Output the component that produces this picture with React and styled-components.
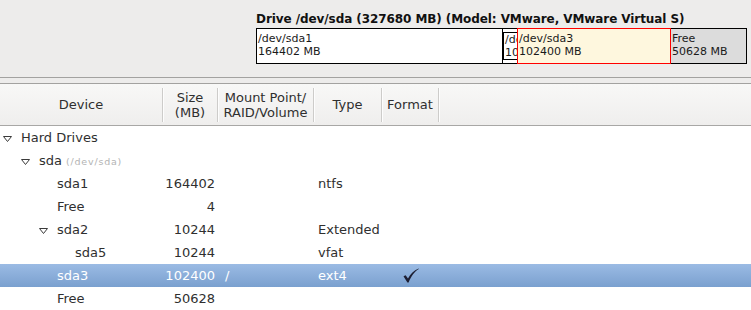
import React from "react";
import styled, { createGlobalStyle } from "styled-components";

const Global = createGlobalStyle`
  html, body { margin: 0; padding: 0; }
  body {
    background: #ffffff;
    font-family: "DejaVu Sans", "Liberation Sans", sans-serif;
    color: #2f2f2f;
    overflow: hidden;
  }
`;

const Page = styled.div`
  width: 751px;
  height: 310px;
  display: flex;
  flex-direction: column;
  overflow: hidden;
`;

const DrivePanel = styled.div`
  height: 78px;
  box-sizing: border-box;
  background: #edeceb;
  padding: 12px 0 0 256px;
  display: flex;
  flex-direction: column;
  gap: 2px;
`;

const DriveTitle = styled.div`
  font-size: 12px;
  line-height: 14px;
  font-weight: bold;
  letter-spacing: -0.08px;
  color: #111;
  white-space: nowrap;
`;

const Bar = styled.div`
  display: flex;
  width: 491px;
  height: 36px;
`;

const Segment = styled.div`
  box-sizing: border-box;
  height: 36px;
  flex: 0 0 ${(p) => p.$w}px;
  background: ${(p) => p.$bg || "#ffffff"};
  border-top: 1px solid ${(p) => (p.$selected ? "#ff0000" : "#000")};
  border-bottom: 1px solid ${(p) => (p.$selected ? "#ff0000" : "#000")};
  border-left: ${(p) =>
    p.$selected ? "1px solid #ff0000" : p.$first ? "1px solid #000" : "none"};
  border-right: ${(p) =>
    p.$selected ? "1px solid #ff0000" : p.$edge ? "1px solid #000" : "none"};
  padding: ${(p) => (p.$container ? "3px 0" : "3px 0 0 1px")};
  overflow: hidden;
  font-size: 11px;
  line-height: 13px;
  color: #1a1a1a;
  white-space: nowrap;
`;

const InnerBox = styled.div`
  box-sizing: border-box;
  height: 28px;
  border: 1px solid #000;
  border-right: none;
  background: #fff;
  padding: 0 0 0 1px;
  overflow: hidden;
`;

const Divider = styled.div`
  height: 5px;
  background: #edeceb;
  border-top: 1px solid #a3a2a0;
  border-bottom: 1px solid #a3a2a0;
`;

const cols = "162px 55px 96px 68px 57px 1fr";

const HeaderRow = styled.div`
  display: grid;
  grid-template-columns: ${cols};
  height: 41px;
  align-items: center;
  background: linear-gradient(#f8f8f7, #efeeed);
  border-bottom: 1px solid #a8a7a5;
  font-size: 13px;
  color: #2f2f2f;
`;

const HeaderCell = styled.div`
  box-sizing: border-box;
  height: 34px;
  display: flex;
  align-items: center;
  justify-content: center;
  text-align: center;
  line-height: 15px;
  border-left: ${(p) => (p.$sep ? "1px solid #cdccca" : "none")};
  box-shadow: ${(p) => (p.$sep ? "inset 1px 0 0 #fdfdfd" : "none")};
  white-space: nowrap;
`;

const Row = styled.div`
  display: grid;
  grid-template-columns: ${cols};
  height: 23px;
  align-items: center;
  font-size: 13px;
  white-space: nowrap;
  color: ${(p) => (p.$selected ? "#ffffff" : "#2f2f2f")};
  background: ${(p) =>
    p.$selected ? "linear-gradient(#9bbbe4, #7aa0cf)" : "#ffffff"};
`;

const NameCell = styled.div`
  display: flex;
  align-items: center;
  padding-left: ${(p) => 3 + p.$depth * 18}px;
`;

const Expander = styled.span`
  flex: 0 0 18px;
  display: flex;
  align-items: center;
  height: 23px;
  svg { display: block; margin-top: 3px; }
`;

const SubLabel = styled.span`
  font-size: 9.5px;
  letter-spacing: 0.8px;
  color: #b3b3b3;
  margin-left: 4px;
  margin-top: 2px;
`;

const SizeCell = styled.div`
  text-align: right;
  padding-right: 2px;
`;

const MountCell = styled.div`
  padding-left: 8px;
`;

const TypeCell = styled.div`
  padding-left: 5px;
`;

const FormatCell = styled.div`
  padding-left: 22px;
  display: flex;
  align-items: center;
  svg { display: block; }
`;

const Triangle = () => (
  <svg width="9" height="6" viewBox="0 0 9 6">
    <polygon
      points="0.5,0.5 8.5,0.5 4.5,5.5"
      fill="none"
      stroke="#3a3a3a"
      strokeWidth="1"
      strokeLinejoin="round"
    />
  </svg>
);

const Check = () => (
  <svg width="16" height="15" viewBox="0 0 16 15">
    <path
      d="M0.5 8.2 L2.6 7.2 L5 10.6 C7.5 5.8 10.8 2.4 15.6 0.4 L15.8 0.9 C11.4 3.6 8.4 7.6 5.6 14.4 L4.4 14.4 Z"
      fill="#1d1f33"
    />
  </svg>
);

const rows = [
  { name: "Hard Drives", depth: 0, exp: true },
  { name: "sda", sub: "(/dev/sda)", depth: 1, exp: true },
  { name: "sda1", depth: 2, size: "164402", type: "ntfs" },
  { name: "Free", depth: 2, size: "4" },
  { name: "sda2", depth: 2, exp: true, size: "10244", type: "Extended" },
  { name: "sda5", depth: 3, size: "10244", type: "vfat" },
  { name: "sda3", depth: 2, size: "102400", mount: "/", type: "ext4", format: true, selected: true },
  { name: "Free", depth: 2, size: "50628" },
];

export default function App() {
  return (
    <Page>
      <Global />
      <DrivePanel>
        <DriveTitle>Drive /dev/sda (327680 MB) (Model: VMware, VMware Virtual S)</DriveTitle>
        <Bar>
          <Segment $w={247} $first $edge>
            /dev/sda1<br />164402 MB
          </Segment>
          <Segment $w={14} $container>
            <InnerBox>
              /dev/sda5<br />10244 MB
            </InnerBox>
          </Segment>
          <Segment $w={154} $selected $bg="#fef7de">
            /dev/sda3<br />102400 MB
          </Segment>
          <Segment $w={76} $edge $bg="#dcdcdc">
            Free<br />50628 MB
          </Segment>
        </Bar>
      </DrivePanel>
      <Divider />
      <HeaderRow>
        <HeaderCell>Device</HeaderCell>
        <HeaderCell $sep>Size<br />(MB)</HeaderCell>
        <HeaderCell $sep>Mount Point/<br />RAID/Volume</HeaderCell>
        <HeaderCell $sep>Type</HeaderCell>
        <HeaderCell $sep>Format</HeaderCell>
        <HeaderCell $sep />
      </HeaderRow>
      {rows.map((r, i) => (
        <Row key={i} $selected={r.selected}>
          <NameCell $depth={r.depth}>
            <Expander>{r.exp ? <Triangle /> : null}</Expander>
            <span>{r.name}</span>
            {r.sub ? <SubLabel>{r.sub}</SubLabel> : null}
          </NameCell>
          <SizeCell>{r.size || ""}</SizeCell>
          <MountCell>{r.mount || ""}</MountCell>
          <TypeCell>{r.type || ""}</TypeCell>
          <FormatCell>{r.format ? <Check /> : null}</FormatCell>
          <div />
        </Row>
      ))}
    </Page>
  );
}
